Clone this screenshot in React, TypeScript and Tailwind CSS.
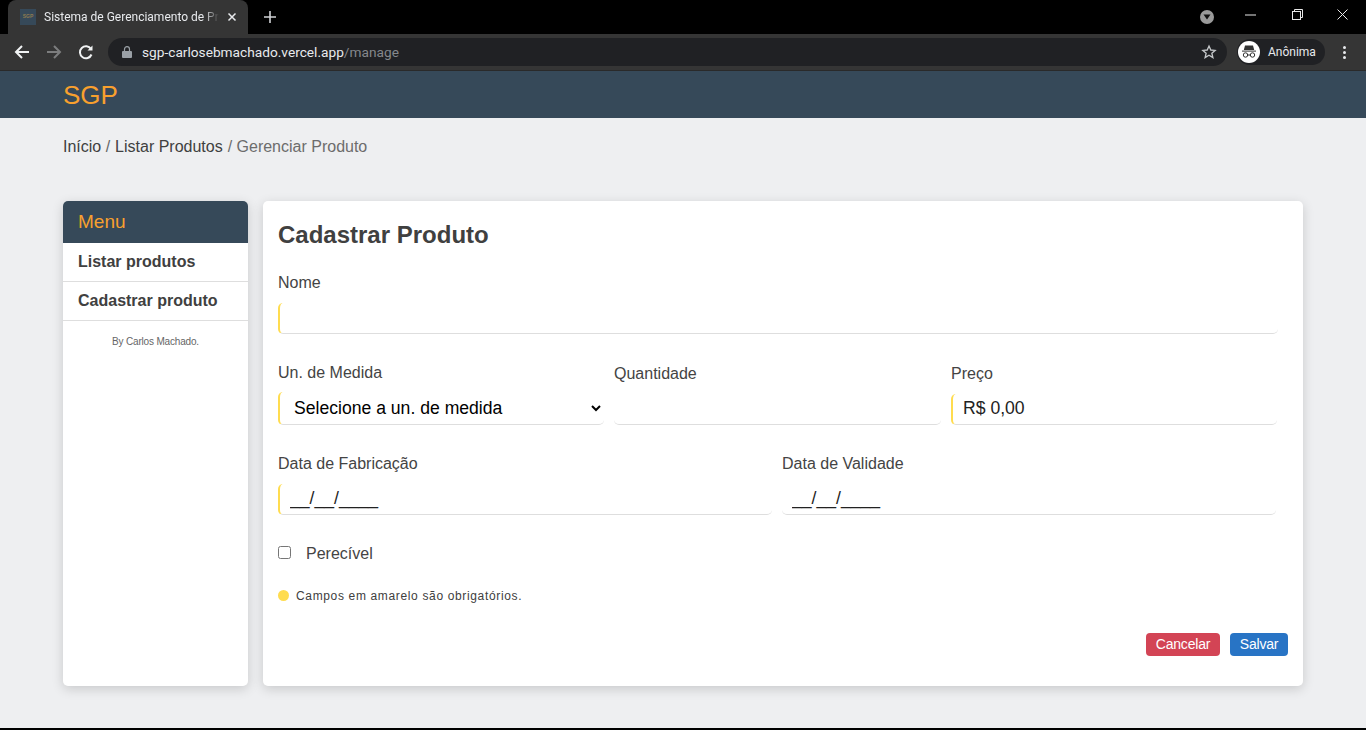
import React from "react";

function Field({ label, value, required, className }: { label: string; value?: string; required?: boolean; className?: string }) {
  return (
    <div className={className}>
      <label className="block text-[16px] leading-[18px] text-[#444]">{label}</label>
      <input
        readOnly
        value={value ?? ""}
        className={`mt-[11px] block w-full h-[31px] rounded-[5px] bg-white border-b border-[#dedede] text-[17.6px] text-[#222] outline-none pb-[2px] ${required ? "border-l-2 border-l-[#ffdc4f]" : "border-l-0"} pl-[10px]`}
      />
    </div>
  );
}

export default function App() {
  return (
    <div className="h-[730px] w-[1366px] overflow-hidden flex flex-col bg-[#eeeff1] font-['Liberation_Sans',Arial,sans-serif]">
      {/* Browser chrome */}
      <div className="h-[34px] bg-black flex items-end relative shrink-0">
        <div className="ml-[8px] w-[240px] h-[34px] bg-[#353535] rounded-t-[8px] flex items-center pl-[12px] pr-[10px]">
          <div className="w-[16px] h-[16px] bg-[#364959] flex items-center justify-center text-[5px] font-bold text-[#8e7a50] shrink-0">SGP</div>
          <span className="ml-[8px] w-[176px] overflow-hidden whitespace-nowrap text-[12px] text-[#e8eaed] font-['Roboto',sans-serif] [mask-image:linear-gradient(to_right,black_160px,transparent_175px)]">Sistema de Gerenciamento de Pr</span>
          <svg className="ml-[7px] shrink-0" width="10" height="10" viewBox="0 0 10 10"><path d="M1.5 1.5l7 7M8.5 1.5l-7 7" stroke="#e8eaed" strokeWidth="1.5" /></svg>
        </div>
        <svg className="ml-[16px] mb-[11px]" width="12" height="12" viewBox="0 0 12 12"><path d="M6 0v12M0 6h12" stroke="#d0d2d5" strokeWidth="1.6" /></svg>
        <div className="ml-auto flex items-center h-[34px] self-start">
          <div className="mr-[14px] w-[14px] h-[14px] rounded-full bg-[#9a9a9a] flex items-center justify-center">
            <svg width="8" height="6" viewBox="0 0 8 6"><path d="M0.5 0.5h7L4 5.5z" fill="#111" /></svg>
          </div>
          <div className="w-[46px] h-[30px] flex items-center justify-center mb-[5px]">
            <svg width="12" height="2" viewBox="0 0 12 2"><path d="M0 1h11" stroke="#e8e8e8" strokeWidth="1" /></svg>
          </div>
          <div className="w-[46px] h-[30px] flex items-center justify-center mb-[5px]">
            <svg width="11" height="11" viewBox="0 0 11 11" fill="none" stroke="#e8e8e8"><rect x="0.5" y="2.5" width="8" height="8" /><path d="M2.5 2.5v-2h8v8h-2" /></svg>
          </div>
          <div className="w-[46px] h-[30px] flex items-center justify-center mb-[5px]">
            <svg width="12" height="12" viewBox="0 0 12 12"><path d="M0.5 0.5l10 10M10.5 0.5l-10 10" stroke="#e8e8e8" strokeWidth="1" /></svg>
          </div>
        </div>
      </div>
      <div className="h-[37px] bg-[#353535] border-b border-[#2a2a2a] flex items-center shrink-0">
        <svg className="ml-[14px]" width="16" height="16" viewBox="0 0 16 16" fill="none" stroke="#f1f3f4" strokeWidth="2"><path d="M15 8H2M8 2L2 8l6 6" /></svg>
        <svg className="ml-[16px]" width="16" height="16" viewBox="0 0 16 16" fill="none" stroke="#7c7d7e" strokeWidth="2"><path d="M1 8h13M8 2l6 6-6 6" /></svg>
        <svg className="ml-[16px]" width="16" height="16" viewBox="0 0 16 16" fill="none" stroke="#f1f3f4" strokeWidth="2"><path d="M13.5 10.5A6 6 0 1 1 13 5" /><path d="M14.5 1.5v5h-5z" fill="#f1f3f4" stroke="none" /></svg>
        <div className="ml-[14px] w-[1119px] h-[28px] rounded-full bg-[#202124] flex items-center pl-[14px] text-[13.7px] font-['Roboto',sans-serif] relative">
          <svg width="10" height="12" viewBox="0 0 10 12" fill="#9aa0a6"><path d="M1 5h8a1 1 0 0 1 1 1v5a1 1 0 0 1-1 1H1a1 1 0 0 1-1-1V6a1 1 0 0 1 1-1z" /><path d="M2.5 5V3.2a2.5 2.5 0 0 1 5 0V5" fill="none" stroke="#9aa0a6" strokeWidth="1.2" /></svg>
          <span className="ml-[10px] text-[#e8eaed]">sgp-carlosebmachado.vercel.app</span>
          <span className="text-[#85888c]">/manage</span>
          <svg className="absolute right-[10px] top-[6px]" width="16" height="16" viewBox="0 0 24 24" fill="none" stroke="#c4c7c9" strokeWidth="2"><path d="M12 3l2.7 6 6.5.6-4.9 4.3 1.5 6.4L12 16.9 6.2 20.3l1.5-6.4-4.9-4.3 6.5-.6z" /></svg>
        </div>
        <div className="ml-[10px] w-[88px] h-[26px] rounded-full bg-[#202124] flex items-center pl-[1px]">
          <div className="w-[22px] h-[22px] rounded-full bg-white flex items-center justify-center">
            <svg width="16" height="14" viewBox="0 0 16 14"><path d="M4 0.5h8l1.2 4.5H2.8z" fill="#333" /><path d="M1 5.6h14v1H1z" fill="#333" /><circle cx="4.5" cy="10" r="2.2" fill="none" stroke="#333" strokeWidth="1" /><circle cx="11.5" cy="10" r="2.2" fill="none" stroke="#333" strokeWidth="1" /><path d="M6.7 10h2.6" stroke="#333" /></svg>
          </div>
          <span className="ml-[8px] text-[12px] text-[#e8eaed] font-['Roboto',sans-serif]">Anônima</span>
        </div>
        <div className="ml-[18px] flex flex-col gap-[2px]">
          <span className="w-[3px] h-[3px] rounded-full bg-[#e8eaed]" />
          <span className="w-[3px] h-[3px] rounded-full bg-[#e8eaed]" />
          <span className="w-[3px] h-[3px] rounded-full bg-[#e8eaed]" />
        </div>
      </div>

      {/* App header */}
      <header className="h-[47px] bg-[#364959] flex items-center pl-[63px] shrink-0">
        <span className="text-[26px] text-[#f8a02e] leading-[48px]">SGP</span>
      </header>

      {/* Page */}
      <div className="flex-1 px-[63px]">
        <nav className="pt-[20px] h-[83px] text-[16px] leading-[18px] text-[#404040]">
          Início <span className="text-[#666] pr-[0.5px]">/</span> Listar Produtos <span className="text-[#6c6c6c] pl-[0.5px]">/ Gerenciar Produto</span>
        </nav>
        <div className="flex gap-[15px] h-[485px]">
          <aside className="w-[185px] bg-white rounded-[5px] shadow-[0_3px_12px_rgba(0,0,0,0.16)] overflow-hidden">
            <div className="h-[42px] bg-[#364959] text-[#f8a02e] text-[19px] flex items-center pl-[15px]">Menu</div>
            <div className="h-[39px] border-b border-[#dedede] pl-[15px] flex items-center text-[16px] font-bold text-[#404040]">Listar produtos</div>
            <div className="h-[39px] border-b border-[#dedede] pl-[15px] flex items-center text-[16px] font-bold text-[#404040]">Cadastrar produto</div>
            <p className="text-center text-[10px] tracking-[-0.17px] leading-[14px] text-[#666] mt-[14px]">By Carlos Machado.</p>
          </aside>
          <main className="w-[1040px] bg-white rounded-[5px] shadow-[0_3px_12px_rgba(0,0,0,0.16)] pl-[15px] pr-[15px] pt-[20px] relative">
            <h1 className="text-[24px] font-bold leading-[28px] text-[#404040]">Cadastrar Produto</h1>
            <div className="w-[1000px] mt-[25px]">
              <Field label="Nome" required />
            </div>
            <div className="flex gap-[10px] mt-[30px] w-[999px]">
              <div className="w-[326px]">
                <label className="block text-[16px] leading-[18px] text-[#444]">Un. de Medida</label>
                <select className="mt-[10px] block w-full h-[33px] rounded-[5px] bg-white border-b border-[#dedede] border-l-2 border-l-[#ffdc4f] text-[17.6px] text-black pl-[10px] pr-[2px] outline-none">
                  <option>Selecione a un. de medida</option>
                </select>
              </div>
              <Field className="w-[327px] pt-[1px]" label="Quantidade" />
              <Field className="w-[326px] pt-[1px]" label="Preço" value="R$ 0,00" required />
            </div>
            <div className="flex gap-[10px] mt-[30px] w-[998px]">
              <Field className="w-[494px]" label="Data de Fabricação" value="__/__/____" required />
              <Field className="w-[494px]" label="Data de Validade" value="__/__/____" />
            </div>
            <label className="flex items-center mt-[30px] text-[16px] leading-[18px] text-[#444]">
              <input type="checkbox" className="w-[13px] h-[13px] appearance-auto mb-[3px]" />
              <span className="ml-[15px]">Perecível</span>
            </label>
            <div className="flex items-center mt-[24px] text-[12px] tracking-[0.65px] text-[#404040]">
              <span className="w-[11px] h-[11px] rounded-full bg-[#ffdc4f] mb-[2px]" />
              <span className="ml-[7px]">Campos em amarelo são obrigatórios.</span>
            </div>
            <div className="absolute right-[15px] bottom-[30px] flex gap-[10px]">
              <button className="h-[23px] w-[74px] rounded-[4px] bg-[#d34455] text-white text-[14px] tracking-[-0.2px]">Cancelar</button>
              <button className="h-[23px] w-[58px] rounded-[4px] bg-[#2874c5] text-white text-[14px] tracking-[-0.2px]">Salvar</button>
            </div>
          </main>
        </div>
      </div>
      <div className="h-[2px] bg-black shrink-0" />
    </div>
  );
}
